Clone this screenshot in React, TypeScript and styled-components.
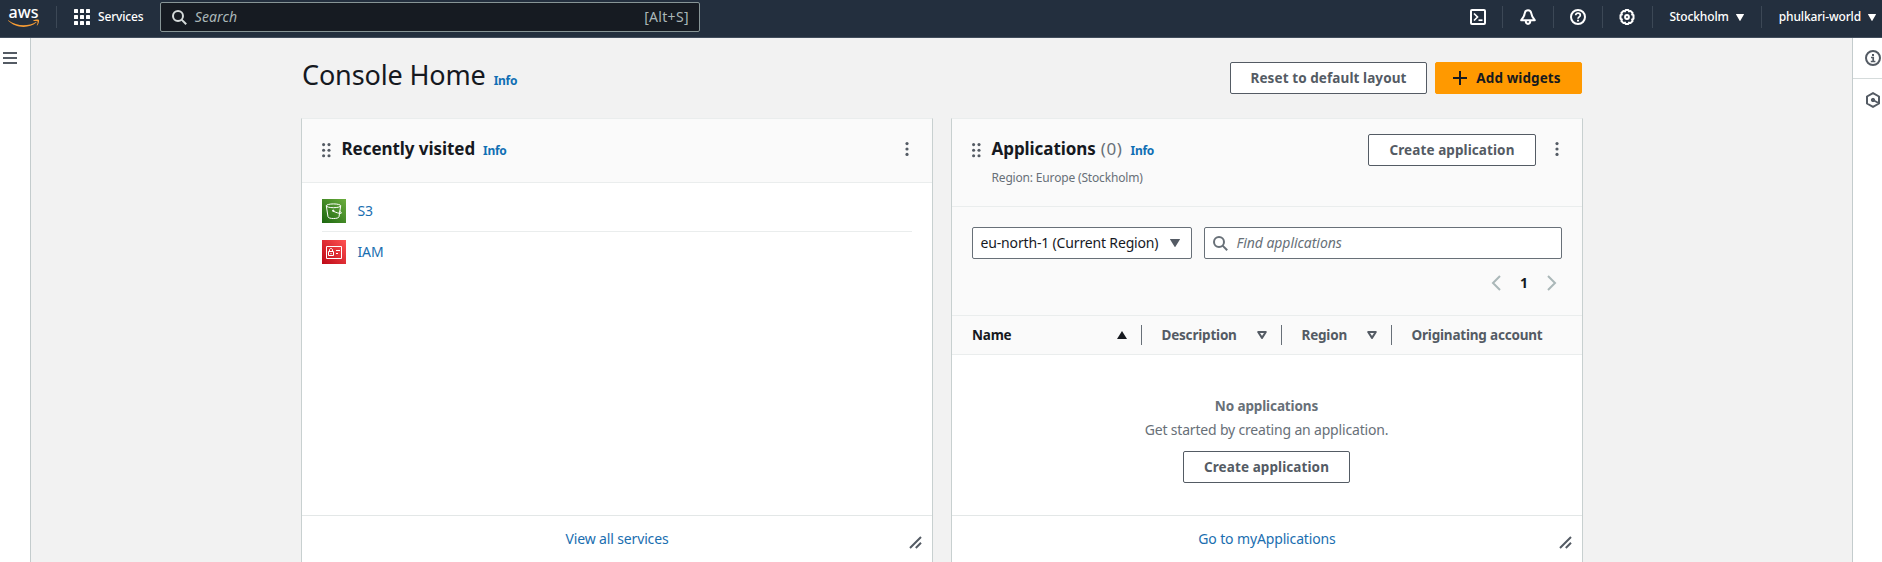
import React from "react";
import styled, { createGlobalStyle } from "styled-components";

const GlobalStyle = createGlobalStyle`
  *, *::before, *::after { box-sizing: border-box; }
  html, body { margin: 0; padding: 0; }
  body {
    background: #f2f2f2;
    color: #16191f;
    font-family: "Noto Sans", "Open Sans", sans-serif;
    font-size: 14px;
    line-height: 20px;
    overflow: hidden;
  }
  svg { display: block; flex: none; }
  button { font-family: inherit; cursor: pointer; }
`;

const Shell = styled.div`
  display: flex;
  flex-direction: column;
  height: 562px;
  overflow: hidden;
`;

/* ---------- top navigation ---------- */

const TopBar = styled.header`
  display: flex;
  align-items: center;
  flex: none;
  height: 38px;
  padding: 0 6px 3px 8px;
  background: #232f3e;
  border-bottom: 1px solid #414d5c;
  color: #fff;
`;

const Spacer = styled.div`
  flex: 1;
`;

const NavDivider = styled.span`
  width: 1px;
  height: 22px;
  background: #3c4856;
`;

const ServicesMenu = styled.button`
  display: flex;
  align-items: center;
  gap: 8px;
  margin-left: 17px;
  padding: 0;
  border: 0;
  background: none;
  color: #fff;
  font-size: 12px;
  font-weight: 500;
  line-height: 20px;
  letter-spacing: -0.18px;
`;

const Logo = styled.div`
  width: 48px;
  height: 24px;
`;

const GlobalSearch = styled.label`
  display: flex;
  align-items: center;
  width: 540px;
  height: 30px;
  margin-left: 16.5px;
  padding: 0 10px 0 11px;
  border: 1px solid #879596;
  border-radius: 2px;
  background: #161b22;
  color: #aab7b8;
`;

const SearchHint = styled.span`
  flex: 1;
  margin-left: 8px;
  font-style: italic;
  letter-spacing: 0.1px;
`;

const Shortcut = styled.span`
  letter-spacing: 0.3px;
`;

const UtilityIcon = styled.span<{ $w: number }>`
  display: flex;
  align-items: center;
  justify-content: center;
  width: ${(p) => p.$w}px;
`;

const UtilityMenu = styled.button<{ $left: number; $right: number }>`
  display: flex;
  align-items: center;
  gap: 7px;
  padding: 0 ${(p) => p.$right}px 0 ${(p) => p.$left}px;
  border: 0;
  background: none;
  color: #fff;
  font-size: 12px;
  font-weight: 500;
  line-height: 20px;
  letter-spacing: -0.14px;
`;

/* ---------- page frame ---------- */

const Frame = styled.div`
  display: flex;
  flex: 1;
  min-height: 0;
`;

const LeftRail = styled.nav`
  width: 31px;
  padding: 14px 0 0 3px;
  background: #fff;
  border-right: 1px solid #c4cccd;
`;

const RightRail = styled.aside`
  width: 30px;
  background: #fff;
  border-left: 1px solid #c4cccd;
`;

const RailItem = styled.div`
  display: flex;
  align-items: center;
  height: 40px;
  padding-left: 12px;

  & + & {
    height: 42px;
    border-top: 1px solid #d5dbdb;
  }
`;

const Main = styled.main`
  display: flex;
  flex: 1;
  flex-direction: column;
  padding-left: 270px;
`;

const PageHeader = styled.div`
  display: flex;
  align-items: flex-start;
  justify-content: space-between;
  width: 1281px;
  height: 80px;
  padding-top: 24px;
`;

const TitleGroup = styled.div`
  display: flex;
  align-items: baseline;
`;

const PageTitle = styled.h1`
  margin: -4px 0 0 1px;
  font-size: 27px;
  font-weight: 400;
  line-height: 34px;
  letter-spacing: -0.14px;
`;

const InfoLink = styled.a`
  margin-left: 8px;
  color: #0f6fb4;
  font-size: 12px;
  font-weight: 700;
  line-height: 16px;
  letter-spacing: -0.3px;
`;

const Actions = styled.div`
  display: flex;
  align-items: center;
  gap: 8px;
`;

const Button = styled.button<{ $primary?: boolean; $w: number }>`
  display: flex;
  align-items: center;
  justify-content: center;
  gap: 9px;
  width: ${(p) => p.$w}px;
  height: 32px;
  padding: 0 ${(p) => (p.$primary ? 3 : 0)}px 0 0;
  border: 1px solid ${(p) => (p.$primary ? "#ff9900" : "#545b64")};
  border-radius: 2px;
  background: ${(p) => (p.$primary ? "#ff9900" : "#fff")};
  color: ${(p) => (p.$primary ? "#16191f" : "#545b64")};
  font-size: 13.5px;
  font-weight: 700;
  line-height: 20px;
  letter-spacing: 0.09px;
`;

/* ---------- widgets ---------- */

const Widgets = styled.div`
  display: grid;
  grid-template-columns: 632px 632px;
  gap: 18px;
  flex: 1;
  min-height: 0;
`;

const Card = styled.section`
  display: flex;
  flex-direction: column;
  min-height: 0;
  border: 1px solid #c8d0d0;
  border-top-color: #eaeded;
  border-bottom: 0;
  background: #fff;
`;

const CardHeader = styled.div<{ $h: number }>`
  display: flex;
  align-items: flex-start;
  flex: none;
  height: ${(p) => p.$h}px;
  padding: 15px 23px 0 20px;
  background: #fafafa;
  border-bottom: 1px solid #eaeded;
`;

const DragHandle = styled.span`
  width: 19.5px;
  padding-top: 9px;
`;

const CardHeading = styled.div`
  flex: 1;
`;

const CardTitle = styled.h2`
  margin: 0;
  font-size: 17px;
  font-weight: 700;
  line-height: 30px;
  letter-spacing: -0.06px;
`;

const Counter = styled.span`
  margin-left: 5px;
  color: #687078;
  font-weight: 400;
  letter-spacing: 0.6px;
`;

const CardSubtitle = styled.p`
  margin: 6px 0 0;
  color: #687078;
  font-size: 12px;
  line-height: 16px;
  letter-spacing: -0.17px;
`;

const KebabButton = styled.span<{ $left: number }>`
  margin: 8px 0 0 ${(p) => p.$left}px;
`;

const CardFooter = styled.div`
  position: relative;
  display: flex;
  align-items: center;
  justify-content: center;
  flex: none;
  height: 47px;
  border-top: 1px solid #e3e7e7;
`;

const ResizeCorner = styled.span`
  position: absolute;
  right: 10px;
  bottom: 13px;
`;

const Link = styled.a`
  color: #1a6eb0;
  letter-spacing: -0.14px;
`;

const ServiceList = styled.ul`
  flex: 1;
  margin: 0 20px;
  padding: 8px 0 0;
  list-style: none;
`;

const ServiceRow = styled.li`
  display: flex;
  align-items: center;
  gap: 11.5px;
  height: 40px;

  & + & {
    height: 41px;
    border-top: 1px solid #eaeded;
  }
`;

const Filters = styled.div`
  display: flex;
  flex-direction: column;
  flex: none;
  height: 109px;
  padding: 20px 20px 0;
  background: #fafafa;
  border-bottom: 1px solid #eaeded;
`;

const FilterRow = styled.div`
  display: flex;
  gap: 12px;
`;

const Select = styled.div`
  display: flex;
  align-items: center;
  justify-content: space-between;
  width: 220px;
  height: 32px;
  padding: 0 11px 0 7.5px;
  border: 1px solid #687078;
  border-radius: 2px;
  background: #fff;
  letter-spacing: -0.16px;
`;

const FindInput = styled.label`
  display: flex;
  align-items: center;
  gap: 8.5px;
  flex: 1;
  height: 32px;
  padding: 0 8px;
  border: 1px solid #687078;
  border-radius: 2px;
  background: #fff;
  color: #687078;
  font-style: italic;
  letter-spacing: -0.05px;
`;

const Pagination = styled.div`
  display: flex;
  align-items: center;
  justify-content: flex-end;
  gap: 19px;
  margin-top: 14px;
  padding-right: 5px;
  font-weight: 700;
`;

const TableHead = styled.div`
  display: grid;
  grid-template-columns: 170px 140px 110px 1fr;
  align-items: center;
  flex: none;
  height: 39px;
  padding-left: 20px;
  background: #fafafa;
  border-bottom: 1px solid #eaeded;
`;

const HeadCell = styled.div<{ $active?: boolean; $first?: boolean }>`
  display: flex;
  align-items: center;
  justify-content: space-between;
  height: 20px;
  padding: 0 14px 0 ${(p) => (p.$first ? 0 : 19.5)}px;
  border-right: 1px solid #687078;
  color: ${(p) => (p.$active ? "#16191f" : "#545b64")};
  font-size: 13.5px;
  font-weight: 700;
  letter-spacing: -0.2px;

  &:last-child {
    border-right: 0;
  }
`;

const EmptyState = styled.div`
  display: flex;
  flex: 1;
  flex-direction: column;
  align-items: center;
  padding: 41px 1px 0 0;
  color: #687078;
`;

const EmptyTitle = styled.b`
  font-size: 13.5px;
  letter-spacing: -0.12px;
`;

const EmptyText = styled.p`
  margin: 4px 0 11px;
  letter-spacing: -0.18px;
`;

/* ---------- icons ---------- */

const AwsLogo = () => (
  <svg width="33" height="24" viewBox="0 0 33 24">
    <text x="0.5" y="12.7" fontFamily="Noto Sans, sans-serif" fontSize="16.600" fontWeight="500" fill="#fff" textLength="30" lengthAdjust="spacingAndGlyphs">
      aws
    </text>
    <path d="M.2 15.2C5 18.8 10.500 20.200 15.500 20.200c4.500 0 9-1.200 12.300-3.300.6-.4 1 .2.500.7-3.200 2.900-8 4.400-12.700 4.400C9.500 22 4 19.600.1 15.800c-.3-.4-.2-.8.1-.6z" fill="#f79c34" />
    <path d="M25.500 15.300c1.500-1 4.700-1.200 5.400-.4.6.8-.3 4.200-1.700 5.500-.3.300-.6.100-.4-.3.500-1.200 1.200-3.200.8-3.700-.4-.5-2.600-.5-3.800-.4-.5 0-.6-.4-.3-.7z" fill="#f79c34" />
  </svg>
);

const GridIcon = () => (
  <svg width="16" height="16" viewBox="0 0 16 16" fill="#fff">
    {[0, 6, 12].map((y) => [0, 6, 12].map((x) => <rect key={`${x}-${y}`} x={x} y={y} width="4" height="4" rx=".6" />))}
  </svg>
);

const SearchIcon = ({ color }: { color: string }) => (
  <svg width="15" height="15" viewBox="0 0 15 15" fill="none" stroke={color} strokeWidth="2">
    <circle cx="6" cy="6" r="5" />
    <path d="M9.600 9.600 14.200 14.200" />
  </svg>
);

const TerminalIcon = () => (
  <svg width="16" height="16" viewBox="0 0 16 16" fill="none" stroke="#fff" strokeWidth="2">
    <rect x="1" y="1" width="14" height="14" rx="1" strokeLinejoin="round" />
    <path d="M4 4.500 7.500 8 4 11.500" strokeWidth="1.700" />
    <path d="M8.500 11.200h4" strokeWidth="1.700" />
  </svg>
);

const BellIcon = () => (
  <svg width="16" height="16" viewBox="0 0 16 16" fill="none" stroke="#fff" strokeWidth="2" strokeLinejoin="round">
    <path d="M8 1.200c-2 0-3 1.400-3.300 3.200C4.300 7.500 3.300 9 1.200 11.200h13.600C12.700 9 11.700 7.500 11.300 4.400 11 2.600 10 1.200 8 1.200z" />
    <path d="M5.700 11.600c0 2 .9 3.300 2.300 3.300s2.300-1.300 2.300-3.300" />
  </svg>
);

const HelpIcon = () => (
  <svg width="16" height="16" viewBox="0 0 16 16" fill="none" stroke="#fff" strokeWidth="2">
    <circle cx="8" cy="8" r="7" />
    <path d="M5.700 6.300C5.700 4.900 6.700 4.200 8 4.200s2.300.8 2.300 2c0 1.700-2.300 1.700-2.300 3.600" strokeWidth="1.700" />
    <path d="M8 10.700v1.700" strokeWidth="1.900" />
  </svg>
);

const GearIcon = () => (
  <svg width="16" height="16" viewBox="0 0 16 16" fill="none" stroke="#fff" strokeWidth="2" strokeLinejoin="round">
    <path d="M6.600 1.100h2.800l.6 1.300 1.500-.5 2.100 2.100-.5 1.500 1.400.700v3.600l-1.400.700.5 1.500-2.100 2.100-1.500-.5-.6 1.300H6.600L6 13.600l-1.500.5L2.400 12l.5-1.500-1.400-.700V6.200l1.400-.700L2.400 4l2.100-2.100 1.500.5z" />
    <circle cx="8" cy="8" r="1.900" />
  </svg>
);

const CaretDown = ({ w, h, color }: { w: number; h: number; color: string }) => (
  <svg width={w} height={h} viewBox="0 0 10 8" preserveAspectRatio="none">
    <path d="M.5 0h9c.5 0 .6.300.4.600L5.400 7.700c-.2.300-.6.300-.8 0L.1.600C-.1.300 0 0 .5 0z" fill={color} />
  </svg>
);

const SortIcon = ({ asc }: { asc?: boolean }) => (
  <svg width="10" height="8" viewBox="0 0 10 8">
    {asc ? (
      <path d="M5 0 10 8H0z" fill="#16191f" />
    ) : (
      <path d="M1.200 1h7.600L5 6.900z" fill="none" stroke="#545b64" strokeWidth="2" strokeLinejoin="round" />
    )}
  </svg>
);

const MenuIcon = () => (
  <svg width="14" height="12" viewBox="0 0 14 12" fill="#545b64">
    <path d="M0 0h14v2H0zM0 5h14v2H0zM0 10h14v2H0z" />
  </svg>
);

const InfoIcon = () => (
  <svg width="16" height="16" viewBox="0 0 16 16" fill="none" stroke="#545b64" strokeWidth="2">
    <circle cx="8" cy="8" r="7" />
    <path d="M6 7.500h2.200v4M5.800 11.500h4.600" strokeWidth="1.700" />
    <path d="M7 4.900h2" />
  </svg>
);

const HexIcon = () => (
  <svg width="16" height="16" viewBox="0 0 16 16" fill="none" stroke="#545b64" strokeWidth="2" strokeLinejoin="round">
    <path d="M8 1.100 14 4.500v7L8 14.900 2 11.500v-7z" />
    <path d="M8 8l6 3.300" strokeWidth="1.800" />
    <circle cx="8" cy="8" r="1.700" fill="#545b64" strokeWidth="1" />
  </svg>
);

const PlusIcon = () => (
  <svg width="14" height="14" viewBox="0 0 14 14" stroke="#16191f" strokeWidth="2">
    <path d="M7 0v14M0 7h14" />
  </svg>
);

const DragIcon = () => (
  <svg width="9" height="15" viewBox="0 0 9 15" fill="#545b64">
    {[1.6, 7.2, 12.8].map((y) => [1.6, 7].map((x) => <circle key={`${x}-${y}`} cx={x} cy={y} r="1.550" />))}
  </svg>
);

const KebabIcon = () => (
  <svg width="4" height="14" viewBox="0 0 4 14" fill="#545b64">
    {[1.6, 7, 12.4].map((y) => (
      <circle key={y} cx="2" cy={y} r="1.600" />
    ))}
  </svg>
);

const ChevronIcon = ({ right }: { right?: boolean }) => (
  <svg width="10" height="16" viewBox="0 0 10 16" fill="none" stroke="#aab7b8" strokeWidth="2">
    <path d={right ? "M1 1l7 7-7 7" : "M9 1 2 8l7 7"} />
  </svg>
);

const ResizeIcon = () => (
  <svg width="13" height="13" viewBox="0 0 13 13" stroke="#545b64" strokeWidth="2">
    <path d="M1 12 12 1M6.800 12 12 6.800" />
  </svg>
);

const S3Icon = () => (
  <svg width="24" height="24" viewBox="0 0 24 24">
    <defs>
      <linearGradient id="s3" x1="0" y1="1" x2="1" y2="0">
        <stop offset="0" stopColor="#1b660f" />
        <stop offset="1" stopColor="#6cae3e" />
      </linearGradient>
    </defs>
    <path d="M0 0h24v24H0z" fill="url(#s3)" />
    <g fill="none" stroke="#fff" strokeWidth="1">
      <ellipse cx="11.500" cy="6.800" rx="7.200" ry="1.900" />
      <path d="M4.300 6.800 6 17.800c.3 2.300 10.700 2.300 11 0L18.700 6.800M10.800 11.900c3 1.700 7.300 3 8.500 2.300.700-.5-.7-1.500-2-2" />
      <circle cx="11.200" cy="11.700" r=".7" fill="#fff" />
    </g>
  </svg>
);

const IamIcon = () => (
  <svg width="24" height="24" viewBox="0 0 24 24">
    <defs>
      <linearGradient id="iam" x1="0" y1="1" x2="1" y2="0">
        <stop offset="0" stopColor="#bd0816" />
        <stop offset="1" stopColor="#ff5252" />
      </linearGradient>
    </defs>
    <path d="M0 0h24v24H0z" fill="url(#iam)" />
    <g fill="none" stroke="#fff" strokeWidth="1">
      <path d="M4.500 6.500h15v12h-15zM6.500 11.500h5v4h-5zM7.500 11.500V10c0-2 3-2 3 0v1.500M9 13v1.200M14 10.500h4M14 13.500h2" />
    </g>
  </svg>
);

const services = [
  { name: "S3", icon: <S3Icon /> },
  { name: "IAM", icon: <IamIcon /> },
];

export default function App() {
  return (
    <Shell>
      <GlobalStyle />
      <TopBar>
        <Logo>
          <AwsLogo />
        </Logo>
        <NavDivider />
        <ServicesMenu>
          <GridIcon />
          Services
        </ServicesMenu>
        <GlobalSearch>
          <SearchIcon color="#d5dbdb" />
          <SearchHint>Search</SearchHint>
          <Shortcut>[Alt+S]</Shortcut>
        </GlobalSearch>
        <Spacer />
        <UtilityIcon $w={48}><TerminalIcon /></UtilityIcon>
        <NavDivider />
        <UtilityIcon $w={50}><BellIcon /></UtilityIcon>
        <NavDivider />
        <UtilityIcon $w={48}><HelpIcon /></UtilityIcon>
        <NavDivider />
        <UtilityIcon $w={49}><GearIcon /></UtilityIcon>
        <NavDivider />
        <UtilityMenu $left={16.5} $right={17}>
          Stockholm
          <CaretDown w={8} h={7} color="#fff" />
        </UtilityMenu>
        <NavDivider />
        <UtilityMenu $left={17} $right={0}>
          phulkari-world
          <CaretDown w={8} h={7} color="#fff" />
        </UtilityMenu>
      </TopBar>
      <Frame>
        <LeftRail>
          <MenuIcon />
        </LeftRail>
        <Main>
          <PageHeader>
            <TitleGroup>
              <PageTitle>Console Home</PageTitle>
              <InfoLink>Info</InfoLink>
            </TitleGroup>
            <Actions>
              <Button $w={197}>Reset to default layout</Button>
              <Button $w={147} $primary>
                <PlusIcon />
                Add widgets
              </Button>
            </Actions>
          </PageHeader>
          <Widgets>
            <Card>
              <CardHeader $h={64}>
                <DragHandle><DragIcon /></DragHandle>
                <CardHeading>
                  <CardTitle>
                    Recently visited
                    <InfoLink>Info</InfoLink>
                  </CardTitle>
                </CardHeading>
                <KebabButton $left={14}><KebabIcon /></KebabButton>
              </CardHeader>
              <ServiceList>
                {services.map((s) => (
                  <ServiceRow key={s.name}>
                    {s.icon}
                    <Link>{s.name}</Link>
                  </ServiceRow>
                ))}
              </ServiceList>
              <CardFooter>
                <Link>View all services</Link>
                <ResizeCorner><ResizeIcon /></ResizeCorner>
              </CardFooter>
            </Card>
            <Card>
              <CardHeader $h={88}>
                <DragHandle><DragIcon /></DragHandle>
                <CardHeading>
                  <CardTitle>
                    Applications
                    <Counter>(0)</Counter>
                    <InfoLink>Info</InfoLink>
                  </CardTitle>
                  <CardSubtitle>Region: Europe (Stockholm)</CardSubtitle>
                </CardHeading>
                <Button $w={168}>Create application</Button>
                <KebabButton $left={19}><KebabIcon /></KebabButton>
              </CardHeader>
              <Filters>
                <FilterRow>
                  <Select>
                    eu-north-1 (Current Region)
                    <CaretDown w={10} h={8} color="#545b64" />
                  </Select>
                  <FindInput>
                    <SearchIcon color="#687078" />
                    Find applications
                  </FindInput>
                </FilterRow>
                <Pagination>
                  <ChevronIcon />
                  1
                  <ChevronIcon right />
                </Pagination>
              </Filters>
              <TableHead>
                <HeadCell $active $first>
                  Name
                  <SortIcon asc />
                </HeadCell>
                <HeadCell>
                  Description
                  <SortIcon />
                </HeadCell>
                <HeadCell>
                  Region
                  <SortIcon />
                </HeadCell>
                <HeadCell>Originating account</HeadCell>
              </TableHead>
              <EmptyState>
                <EmptyTitle>No applications</EmptyTitle>
                <EmptyText>Get started by creating an application.</EmptyText>
                <Button $w={167}>Create application</Button>
              </EmptyState>
              <CardFooter>
                <Link>Go to myApplications</Link>
                <ResizeCorner><ResizeIcon /></ResizeCorner>
              </CardFooter>
            </Card>
          </Widgets>
        </Main>
        <RightRail>
          <RailItem><InfoIcon /></RailItem>
          <RailItem><HexIcon /></RailItem>
        </RightRail>
      </Frame>
    </Shell>
  );
}
